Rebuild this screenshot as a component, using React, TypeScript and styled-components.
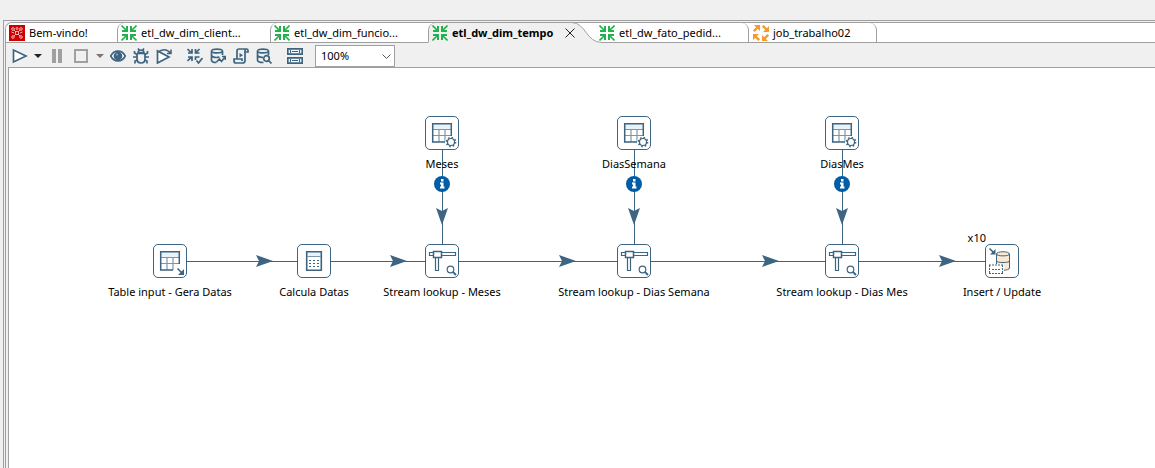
import React from "react";
import styled, { createGlobalStyle, css } from "styled-components";

const steel = "#3d6480";
const line = "#a0a0a0";
const chrome = "#f0f0f0";

const GlobalStyle = createGlobalStyle`
  *, *::before, *::after { box-sizing: border-box; }
  html, body, #root { height: 100%; }
  body {
    margin: 0;
    background: ${chrome};
    color: #000;
    font: 11px/16px "Noto Sans", "Open Sans", sans-serif;
  }
  button { font: inherit; color: inherit; }
  svg { display: block; flex: none; }
`;

const Page = styled.div`
  display: flex;
  flex-direction: column;
  min-height: 100%;
  padding: 20px 0 0 3px;
`;

const Frame = styled.main`
  display: flex;
  flex: 1;
  flex-direction: column;
  padding: 1px 0 0 1px;
  border: solid ${line};
  border-width: 1px 0 0 1px;
`;

const Folder = styled.section`
  display: flex;
  flex: 1;
  flex-direction: column;
  border: solid ${line};
  border-width: 1px 0 0 1px;
  border-top-left-radius: 7px;
`;

const TabBar = styled.div`
  display: flex;
  height: 20px;
  background: #fff;
  border-top-left-radius: 6px;
`;

type TabSide = "first" | "before" | "active" | "next" | "after";

const Tab = styled.button<{ $side: TabSide; $width: number }>`
  display: flex;
  flex: none;
  align-items: center;
  gap: 4px;
  width: ${(p) => p.$width}px;
  padding: 0 0 0 3px;
  border: 0 solid ${line};
  border-bottom-width: 1px;
  background: none;
  white-space: nowrap;
  ${(p) =>
    (p.$side === "before" || p.$side === "active") &&
    css`
      border-left-width: 1px;
      border-top-left-radius: 7px;
    `}
  ${(p) =>
    (p.$side === "next" || p.$side === "after") &&
    css`
      border-right-width: 1px;
      border-top-right-radius: 7px;
    `}
  ${(p) =>
    p.$side === "after" &&
    css`
      padding-left: 4px;
    `}
  ${(p) =>
    p.$side === "active" &&
    css`
      position: relative;
      z-index: 1;
      border-bottom-color: ${chrome};
      background: ${chrome};
      font-weight: 700;
    `}
  ${(p) =>
    p.$side === "next" &&
    css`
      margin-left: -10px;
      padding-left: 1px;
      border-bottom-color: transparent;
      background: linear-gradient(${line}, ${line}) 10px 100% / 100% 1px no-repeat;
      background-origin: border-box;
      background-clip: border-box;
    `}
`;

const CloseMark = styled.svg`
  margin-left: 8px;
`;

const TabRest = styled.div`
  flex: 1;
  border-bottom: 1px solid ${line};
`;

const Toolbar = styled.div`
  display: flex;
  align-items: center;
  height: 24px;
  padding: 2px 0 0 2px;
`;

const Tool = styled.button<{ $width?: number; $gap?: number }>`
  display: flex;
  flex: none;
  align-items: center;
  justify-content: center;
  width: ${(p) => p.$width ?? 23}px;
  height: 22px;
  margin: 0 0 0 ${(p) => p.$gap ?? 0}px;
  padding: 0;
  border: 0;
  background: none;
`;

const Zoom = styled.label`
  position: relative;
  display: flex;
  align-self: stretch;
  width: 80px;
  margin-left: 9px;
`;

const ZoomSelect = styled.select`
  width: 100%;
  padding: 0 5px;
  border: 1px solid ${line};
  border-radius: 0;
  background: #fff;
  color: #000;
  font: inherit;
  appearance: none;
`;

const ZoomArrow = styled.svg`
  position: absolute;
  top: 9px;
  right: 4px;
  pointer-events: none;
`;

const Canvas = styled.div`
  position: relative;
  flex: 1;
  min-height: 400px;
  margin-left: 2px;
  overflow: hidden;
  border: solid ${line};
  border-width: 1px 0 0 1px;
  background: #fff;
`;

const Hops = styled.svg`
  position: absolute;
  inset: 0;
  width: 100%;
  height: 100%;
`;

const Step = styled.figure<{ $x: number; $y: number }>`
  position: absolute;
  left: ${(p) => p.$x}px;
  top: ${(p) => p.$y}px;
  display: flex;
  flex-direction: column;
  align-items: center;
  gap: 6px;
  width: 34px;
  margin: 0;
`;

const StepBox = styled.div`
  width: 34px;
  height: 34px;
  border: 1px solid ${steel};
  border-radius: 5px;
  background: #fff;
`;

const StepLabel = styled.figcaption`
  white-space: nowrap;
`;

const Copies = styled.span`
  position: absolute;
  right: 33px;
  top: -14px;
`;

const Converge = () => (
  <svg width="16" height="16" viewBox="0 0 16 16" fill="none" stroke="#22b14c" strokeWidth="2" aria-hidden="true">
    <path d="M0.5.5 6 6M15.5.5 10 6M.5 15.5 6 10M15.5 15.5 10 10" strokeWidth="1.6" />
    <path d="M6 1v5H1M10 1v5h5M6 15v-5H1M10 15v-5h5" />
  </svg>
);

const JobIcon = () => (
  <svg width="16" height="16" viewBox="0 0 16 16" fill="#f49b2c" stroke="#f49b2c" strokeWidth="2.4" aria-hidden="true">
    <path d="M.8 6.200 5 2M9.800.8l4.200 4.200M15.200 9.800 11 14M6.200 15.200 2 11" />
    <path stroke="none" d="M1 0h6v6zM16 1v6h-6zM15 16H9v-6zM0 15V9h6z" />
  </svg>
);

const WelcomeIcon = () => (
  <svg width="16" height="16" viewBox="0 0 16 16" fill="none" stroke="#f6b5b5" aria-hidden="true">
    <path d="M0 0h16v16H0z" fill="#cc0000" stroke="none" />
    <circle cx="4" cy="4" r="1.3" />
    <circle cx="8" cy="3.5" r="1" />
    <circle cx="12" cy="4" r="1.3" />
    <circle cx="8" cy="8" r="1.7" />
    <circle cx="4" cy="12" r="1.3" />
    <circle cx="12" cy="12" r="1.3" />
    <path d="m5 5 2 2M11 5 9 7M5 11l2-2M11 11 9 9M2.5 7 5 8M13.5 7 11 8" />
  </svg>
);

const TabCurve = () => (
  <svg width="36" height="20" viewBox="0 0 36 20" aria-hidden="true">
    <path d="M0 0C14 0 14 19.500 30 19.500H36V20H0Z" fill={chrome} />
    <path d="M0-.5C14 0 14 19.500 30 19.500H36" fill="none" stroke={line} />
  </svg>
);

type IconProps = { children: React.ReactNode };

const Glyph = ({ children }: IconProps) => (
  <svg width="16" height="16" viewBox="0 0 16 16" fill="none" stroke={steel} strokeWidth="1.7" aria-hidden="true">
    {children}
  </svg>
);

const Caret = ({ color }: { color: string }) => (
  <svg width="8" height="4" viewBox="0 0 8 4" fill={color} aria-hidden="true">
    <path d="M0 0h8L4 4z" />
  </svg>
);

const TableArt = () => (
  <>
    <path d="M7 7h18v5H7z" fill="#e9f2f9" stroke="none" />
    <path d="M7 12.500h18M7 18.500h18M13 13v12M19 13v12" stroke="#7d97a8" strokeWidth="1.200" />
    <path d="M19 25H6.700V6.700H25.300V19" strokeWidth="1.500" />
  </>
);

type StepKind = "grid" | "tableInput" | "calc" | "lookup" | "update";

const art: Record<StepKind, React.ReactNode> = {
  grid: (
    <>
      <TableArt />
      <circle cx="25" cy="25" r="6" fill="#fff" stroke="none" />
      <circle cx="25" cy="25" r="3.500" strokeWidth="1.200" />
      <circle cx="25" cy="25" r="4.600" strokeDasharray="1.600 2" strokeWidth="1.500" />
    </>
  ),
  tableInput: (
    <>
      <TableArt />
      <path d="M21 21h10v10H21z" fill="#fff" stroke="none" />
      <path d="m23.500 23.500 5 5" strokeWidth="1.600" />
      <path d="M30 24v6h-6z" fill={steel} stroke="none" />
    </>
  ),
  calc: (
    <>
      <path d="M9 7h14v4H9z" fill="#e9f2f9" stroke="none" />
      <path d="M8.700 6.700h14.600v18.600H8.700z" strokeWidth="1.600" />
      <path d="M9 11.500h14" stroke="#7d97a8" />
      <path d="M11 15.500h10M11 18.500h10M11 21.500h10" strokeDasharray="2 2" />
    </>
  ),
  lookup: (
    <>
      <path d="M3.500 7.500h26v3h-26z" fill="#fff" strokeWidth="1.200" />
      <path d="M9.500 11.500h3v14h-3z" fill="#fff" strokeWidth="1.200" />
      <path d="M7.500 6.500h8v6h-8z" fill="#fff" strokeWidth="1.500" />
      <circle cx="24.500" cy="24.500" r="3.300" strokeWidth="1.200" />
      <path d="m27 27 3 3" strokeWidth="1.800" />
    </>
  ),
  update: (
    <>
      <path d="M10.500 9v14c0 3 13 3 13 0V9c0-3-13-3-13 0z" fill="#fce8cf" />
      <path d="M10.500 9c0 2.500 13 2.500 13 0M10.500 16c0 2 13 2 13 0" />
      <path d="M3 19h15v11H3z" fill="#fff" stroke="none" />
      <path d="M3 20h14M3 28.500h14M3.500 20v9M16.500 20v9" strokeDasharray="2 1" />
      <path d="M6 24.500h9" strokeDasharray="2 1" />
      <path d="m3.500 3.500 4 4" strokeWidth="1.600" />
      <path d="M9.500 4v5.500h-5.500z" fill={steel} stroke="none" />
    </>
  ),
};

const steps: { kind: StepKind; label: string; x: number; y: number; copies?: string }[] = [
  { kind: "grid", label: "Meses", x: 416, y: 48 },
  { kind: "grid", label: "DiasSemana", x: 608, y: 48 },
  { kind: "grid", label: "DiasMes", x: 816, y: 48 },
  { kind: "tableInput", label: "Table input - Gera Datas", x: 144, y: 176 },
  { kind: "calc", label: "Calcula Datas", x: 288, y: 176 },
  { kind: "lookup", label: "Stream lookup - Meses", x: 416, y: 176 },
  { kind: "lookup", label: "Stream lookup - Dias Semana", x: 608, y: 176 },
  { kind: "lookup", label: "Stream lookup - Dias Mes", x: 816, y: 176 },
  { kind: "update", label: "Insert / Update", x: 976, y: 176, copies: "x10" },
];

const arrowsAcross = [247, 381, 550, 753, 930];
const infoColumns = [433, 625, 833];

const App = () => (
  <Page>
    <GlobalStyle />
    <Frame>
      <Folder>
        <TabBar role="tablist">
          <Tab role="tab" $side="first" $width={111}><WelcomeIcon />Bem-vindo!</Tab>
          <Tab role="tab" $side="before" $width={153}><Converge />etl_dw_dim_client...</Tab>
          <Tab role="tab" $side="before" $width={158}><Converge />etl_dw_dim_funcio...</Tab>
          <Tab role="tab" aria-selected="true" $side="active" $width={144}>
            <Converge />etl_dw_dim_tempo
            <CloseMark width="10" height="10" viewBox="0 0 10 10" fill="none" stroke="#222" aria-hidden="true">
              <path d="m.5.5 9 9M9.500.5l-9 9" />
            </CloseMark>
          </Tab>
          <TabCurve />
          <Tab role="tab" $side="next" $width={151}><Converge />etl_dw_fato_pedid...</Tab>
          <Tab role="tab" $side="after" $width={128}><JobIcon />job_trabalho02</Tab>
          <TabRest />
        </TabBar>

        <Toolbar role="toolbar">
          <Tool aria-label="Run"><Glyph><path d="M1.500 2v12L14 8z" fill="#fff" /></Glyph></Tool>
          <Tool aria-label="Run options" $width={14}><Caret color="#222" /></Tool>
          <Tool aria-label="Pause">
            <svg width="10" height="14" viewBox="0 0 10 14" fill="#a0a0a0" aria-hidden="true"><path d="M0 0h4v14H0zM6 0h4v14H6z" /></svg>
          </Tool>
          <Tool aria-label="Stop" $width={25}>
            <svg width="14" height="14" viewBox="0 0 14 14" fill="none" stroke="#a0a0a0" strokeWidth="2" aria-hidden="true"><path d="M1 1h12v12H1z" /></svg>
          </Tool>
          <Tool aria-label="Stop options" $width={13}><Caret color="#777" /></Tool>
          <Tool aria-label="Preview">
            <Glyph>
              <path d="M.8 8C4 1.500 12 1.500 15.200 8 12 14.500 4 14.500.8 8z" fill="#fff" />
              <circle cx="8" cy="8" r="3.500" fill={steel} />
              <circle cx="7" cy="6.500" r="1" fill="#9db2c0" stroke="none" />
            </Glyph>
          </Tool>
          <Tool aria-label="Debug">
            <Glyph>
              <path d="M4 7.500c0-1.500 1.500-3 4-3s4 1.500 4 3V11c0 2.500-1.500 4-4 4s-4-1.500-4-4zM5 5c0-2 1-3 3-3s3 1 3 3M5 .5 6.500 2.500M11 .5 9.500 2.500" />
              <path d="M4 9H0M12 9h4M4 6.500 1.500 5V3M12 6.500 14.500 5V3M4.500 12 2 13v2.500M11.500 12l2.500 1v2.500M5 5.500h6" />
            </Glyph>
          </Tool>
          <Tool aria-label="Replay">
            <Glyph>
              <path d="M1.500 3v12L13 9z" fill="#fff" />
              <path d="M3 3.500c4-2.500 8-2.500 11.500 1.500M11 5.500h4V1.500" strokeWidth="1.500" />
            </Glyph>
          </Tool>
          <Tool aria-label="Verify" $gap={8}>
            <Glyph>
              <path d="m.5 1 4 4M12.500 1l-4 4M.5 13l4-4M5 1v4H1M8.500 1v4h4M5 13V9H1M8.500 12V9h4" />
              <path d="m9.500 12.500 2 2.500 4-5" />
            </Glyph>
          </Tool>
          <Tool aria-label="Impact analysis">
            <Glyph>
              <path d="M12.500 7V3c0-2.500-11-2.500-11 0v9c0 2 2 2.500 5 2.500M1.500 3c0 2.500 11 2.500 11 0M1.500 7.500c1 2 5 2.500 8 1.500" />
              <path d="m6.500 14 3-3 2 2.500L15 9M12 8.500h3.500V12" />
            </Glyph>
          </Tool>
          <Tool aria-label="Generate SQL">
            <Glyph>
              <path d="M12 4h3V2.500c0-1-.5-1.500-1.500-1.500H6C4.500 1 4 1.500 4 3v8H1v2c0 1.500.5 2 2 2h6.500c1.500 0 2.500-1 2.500-2.500zV2.500C12 1.500 12.500 1 13.500 1M4 11h5v2" />
              <path d="M6.500 5v4.500L10 7.200z" fill={steel} stroke="none" />
            </Glyph>
          </Tool>
          <Tool aria-label="Explore database">
            <Glyph>
              <path d="M12.500 7V3c0-2.500-11-2.500-11 0v9c0 2 2 2.500 6 2.500M1.500 3c0 2.500 11 2.500 11 0M1.500 7.500c1 1.500 3 2 5.500 1.800" />
              <circle cx="10.500" cy="10.500" r="2.800" />
              <path d="m12.500 12.500 3 3" />
            </Glyph>
          </Tool>
          <Tool aria-label="Show results" $gap={8}>
            <Glyph>
              <path d="M.8.8h14.400v5.400H.8zM.8 9.800h14.400v5.400H.8z" fill="#fff" />
              <path d="M5 3.500h6M5 12.500h6M3.500 2v3M12.500 2v3M3.500 11v3M12.500 11v3" strokeWidth="1.200" />
            </Glyph>
          </Tool>
          <Zoom>
            <ZoomSelect aria-label="Zoom" defaultValue="100%">
              <option>100%</option>
            </ZoomSelect>
            <ZoomArrow width="9" height="6" viewBox="0 0 9 6" fill="none" stroke="#555" aria-hidden="true">
              <path d="m.5.500 4 4 4-4" />
            </ZoomArrow>
          </Zoom>
        </Toolbar>

        <Canvas>
          <Hops stroke={steel} fill={steel} aria-hidden="true">
            <path d="M161 193.500H993" />
            {arrowsAcross.map((x) => (
              <path key={x} transform={`translate(${x} 193)`} stroke="none" d="M0-6 17 0 0 6 3 0z" />
            ))}
            {infoColumns.map((x) => (
              <g key={x} transform={`translate(${x} 0)`}>
                <path d="M.5 66V193" />
                <path stroke="none" d="M-6 140 0 157l6-17-6 3z" />
              </g>
            ))}
          </Hops>
          {steps.map((s) => (
            <Step key={s.label} $x={s.x} $y={s.y}>
              <StepBox>
                <svg width="32" height="32" viewBox="0 0 32 32" fill="none" stroke={steel} aria-hidden="true">
                  {art[s.kind]}
                </svg>
              </StepBox>
              <StepLabel>{s.label}</StepLabel>
              {s.copies && <Copies>{s.copies}</Copies>}
            </Step>
          ))}
          <Hops aria-hidden="true">
            {infoColumns.map((x) => (
              <g key={x} transform={`translate(${x} 116)`}>
                <circle r="8" fill="#005da6" />
                <path d="M-1-5h2.500v2.500H-1zM-2-1.500h3.500v4h1V4.500h-4.500v-2h1v-2h-1z" fill="#fff" />
              </g>
            ))}
          </Hops>
        </Canvas>
      </Folder>
    </Frame>
  </Page>
);

export default App;
